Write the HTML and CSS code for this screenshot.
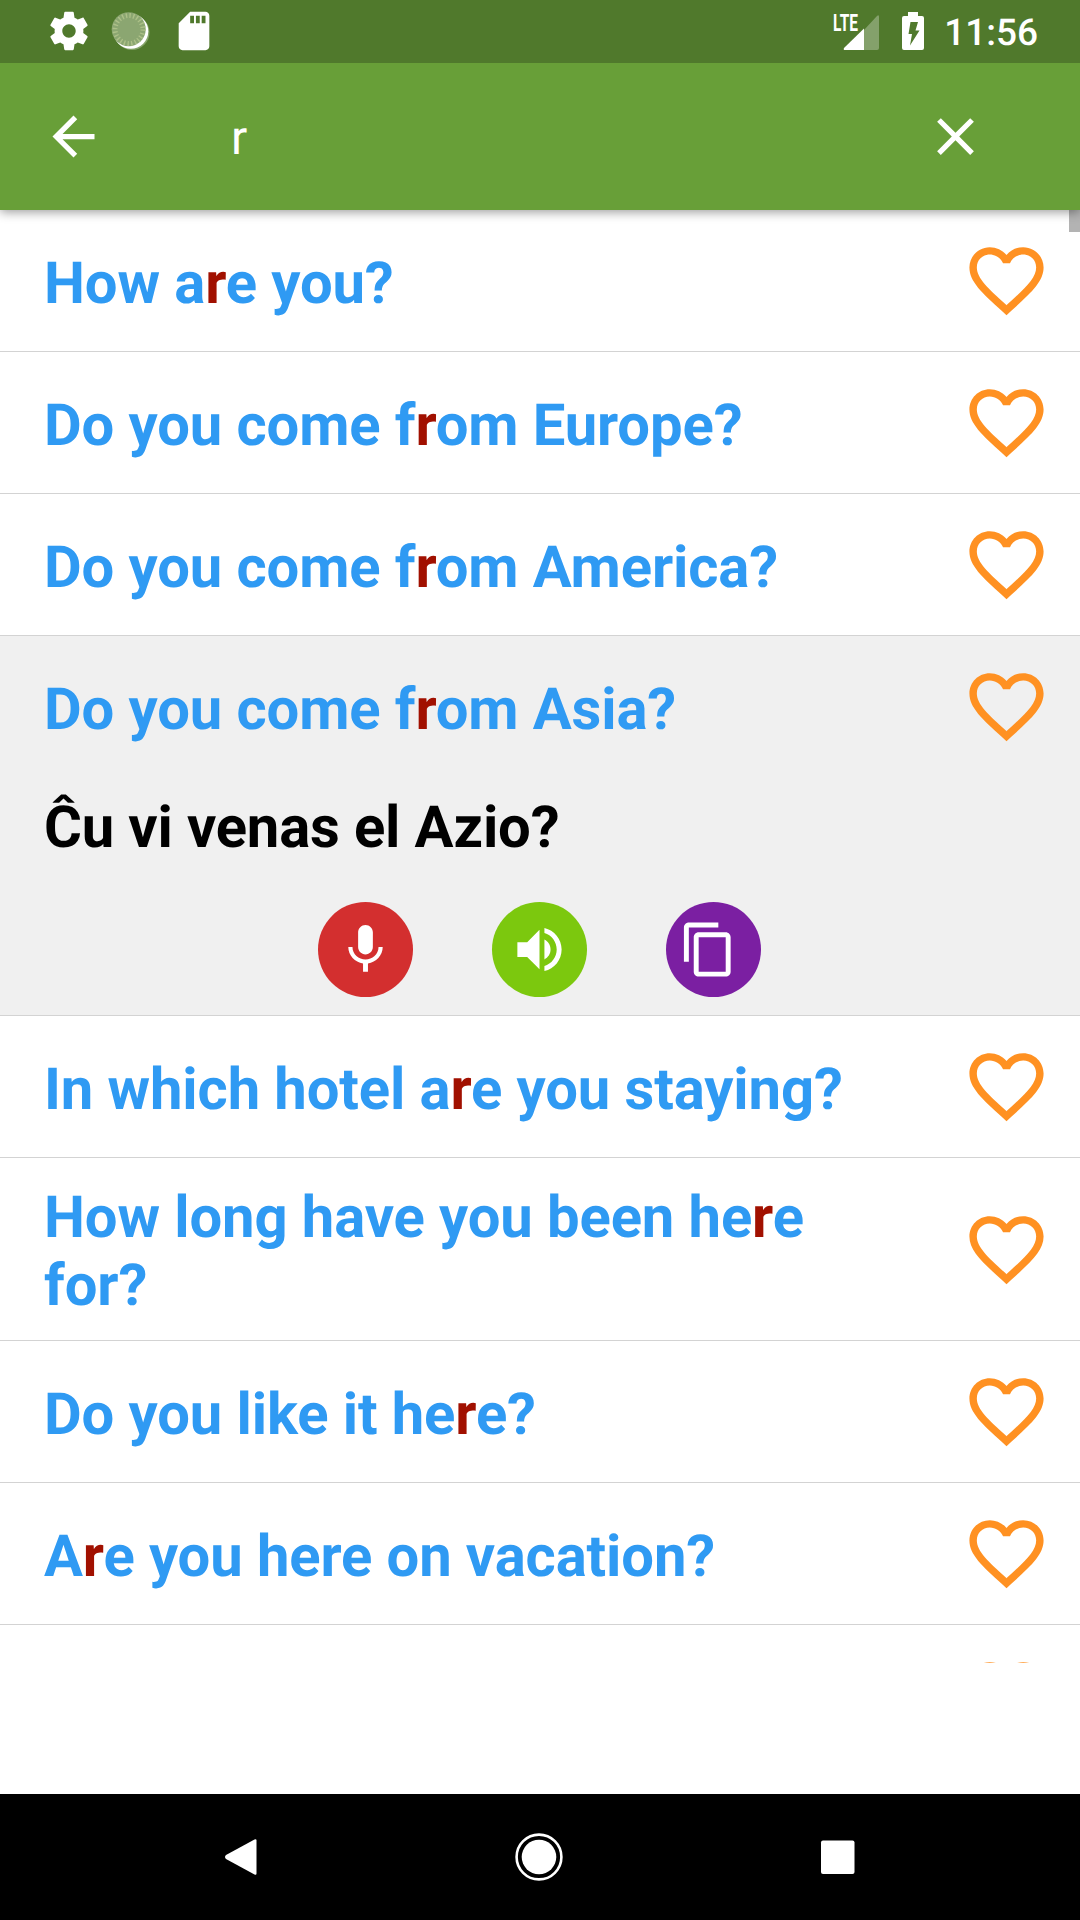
FILE: index.html
```html
<!DOCTYPE html>
<html lang="en">
<head>
    <meta charset="UTF-8">
    <title>Phrasebook</title>
    <link rel="stylesheet" href="styles.css">
</head>
<body>
    <svg class="defs">
        <symbol id="heart" viewBox="0 0 24 24">
            <path d="M16.5 3c-1.74 0-3.41.81-4.5 2.09C10.91 3.81 9.24 3 7.5 3 4.42 3 2 5.42 2 8.5c0 3.78 3.4 6.86 8.55 11.54L12 21.35l1.45-1.32C18.6 15.36 22 12.28 22 8.5 22 5.42 19.58 3 16.5 3zm-4.4 15.55l-.1.1-.1-.1C7.14 14.24 4 11.39 4 8.5 4 6.5 5.5 5 7.5 5c1.54 0 3.04.99 3.57 2.36h1.87C13.46 5.99 14.96 5 16.5 5c2 0 3.5 1.5 3.5 3.5 0 2.89-3.14 5.74-7.9 10.05z"/>
        </symbol>
    </svg>

    <div class="status-bar">
        <div class="status-left">
            <svg class="status-icon" viewBox="0 0 24 24"><path d="M19.43 12.98c.04-.32.07-.64.07-.98s-.03-.66-.07-.98l2.11-1.65c.19-.15.24-.42.12-.64l-2-3.46c-.12-.22-.39-.3-.61-.22l-2.49 1c-.52-.4-1.08-.73-1.69-.98l-.38-2.65C14.46 2.18 14.25 2 14 2h-4c-.25 0-.46.18-.49.42l-.38 2.65c-.61.25-1.17.59-1.69.98l-2.49-1c-.23-.09-.49 0-.61.22l-2 3.46c-.13.22-.07.49.12.64l2.11 1.65c-.04.32-.07.65-.07.98s.03.66.07.98l-2.11 1.65c-.19.15-.24.42-.12.64l2 3.46c.12.22.39.3.61.22l2.49-1c.52.4 1.08.73 1.69.98l.38 2.65c.03.24.24.42.49.42h4c.25 0 .46-.18.49-.42l.38-2.65c.61-.25 1.17-.59 1.69-.98l2.49 1c.23.09.49 0 .61-.22l2-3.46c.12-.22.07-.49-.12-.64l-2.11-1.65zM12 15.5c-1.93 0-3.5-1.57-3.5-3.5s1.57-3.5 3.5-3.5 3.5 1.57 3.5 3.5-1.57 3.5-3.5 3.5z"/></svg>
            <svg class="status-icon" viewBox="0 0 46 46">
                <circle cx="24" cy="24.500" r="17.500" fill="#84a368"/>
                <circle cx="22.800" cy="23.300" r="17.500"/>
                <circle cx="20.700" cy="21.200" r="17" fill="#8ba671"/>
                <circle cx="21" cy="21.500" r="14" fill="none" stroke="#adc088" stroke-width="5" stroke-dasharray="1.400 2.265"/>
            </svg>
            <svg class="status-icon" viewBox="0 0 24 24"><path d="M18 2h-8L4.02 8 4 20c0 1.1.9 2 2 2h12c1.1 0 2-.9 2-2V4c0-1.1-.9-2-2-2zm-6 6h-2V4h2v4zm3 0h-2V4h2v4zm3 0h-2V4h2v4z"/></svg>
        </div>
        <div class="status-right">
            <svg class="signal" viewBox="0 0 48 40">
                <text class="lte" x="0" y="18.500" textLength="25" lengthAdjust="spacingAndGlyphs">LTE</text>
                <path d="M31 18L44 4q2-2 2 1V36q0 2-2 2H31z" opacity=".3"/>
                <path d="M31 16.500V38H12q-2 0-1-2z"/>
            </svg>
            <svg class="battery" viewBox="0 0 22 38"><path fill-rule="evenodd" d="M6 0h10v4h4q2 0 2 2v30q0 2-2 2H2q-2 0-2-2V6q0-2 2-2h4zM8.500 10L6.500 22h3.500L8 33.500 17.500 18.500H13.500L16 10z"/></svg>
            <span class="clock">11:56</span>
        </div>
    </div>

    <div class="toolbar">
        <svg class="tool-icon" viewBox="0 0 24 24"><path d="M20 11H7.830l5.590-5.590L12 4l-8 8 8 8 1.410-1.410L7.830 13H20v-2z"/></svg>
        <span class="query">r</span>
        <svg class="tool-icon" viewBox="0 0 24 24"><path d="M19 6.410L17.590 5 12 10.590 6.410 5 5 6.410 10.590 12 5 17.590 6.410 19 12 13.410 17.590 19 19 17.590 13.410 12z"/></svg>
    </div>

    <div class="list">
        <div class="item">
            <div class="phrase">
                <span class="text">How a<em>r</em>e you?</span>
                <svg class="heart"><use href="#heart"/></svg>
            </div>
        </div>
        <div class="item">
            <div class="phrase">
                <span class="text">Do you come f<em>r</em>om Europe?</span>
                <svg class="heart"><use href="#heart"/></svg>
            </div>
        </div>
        <div class="item">
            <div class="phrase">
                <span class="text">Do you come f<em>r</em>om America?</span>
                <svg class="heart"><use href="#heart"/></svg>
            </div>
        </div>
        <div class="item open">
            <div class="phrase">
                <span class="text">Do you come f<em>r</em>om Asia?</span>
                <svg class="heart"><use href="#heart"/></svg>
            </div>
            <div class="translation">Ĉu vi venas el Azio?</div>
            <div class="actions">
                <div class="action mic">
                    <svg viewBox="0 0 24 24"><path d="M12 14c1.660 0 2.990-1.340 2.990-3L15 5c0-1.660-1.340-3-3-3S9 3.340 9 5v6c0 1.660 1.340 3 3 3zm5.300-3c0 3-2.540 5.100-5.300 5.100S6.700 14 6.700 11H5c0 3.410 2.720 6.230 6 6.720V21h2v-3.280c3.280-.48 6-3.300 6-6.720h-1.700z"/></svg>
                </div>
                <div class="action speak">
                    <svg viewBox="0 0 24 24"><path d="M3 9v6h4l5 5V4L7 9H3zm13.500 3c0-1.770-1.020-3.290-2.500-4.030v8.050c1.480-.73 2.500-2.250 2.500-4.020zM14 3.230v2.060c2.890.86 5 3.540 5 6.710s-2.110 5.850-5 6.710v2.060c4.010-.91 7-4.490 7-8.770s-2.990-7.860-7-8.770z"/></svg>
                </div>
                <div class="action copy">
                    <svg viewBox="0 0 24 24"><path d="M16 1H4c-1.100 0-2 .9-2 2v14h2V3h12V1zm3 4H8c-1.100 0-2 .9-2 2v14c0 1.100.9 2 2 2h11c1.100 0 2-.9 2-2V7c0-1.100-.9-2-2-2zm0 16H8V7h11v14z"/></svg>
                </div>
            </div>
        </div>
        <div class="item">
            <div class="phrase">
                <span class="text">In which hotel a<em>r</em>e you staying?</span>
                <svg class="heart"><use href="#heart"/></svg>
            </div>
        </div>
        <div class="item">
            <div class="phrase">
                <span class="text">How long have you been he<em>r</em>e for?</span>
                <svg class="heart"><use href="#heart"/></svg>
            </div>
        </div>
        <div class="item">
            <div class="phrase">
                <span class="text">Do you like it he<em>r</em>e?</span>
                <svg class="heart"><use href="#heart"/></svg>
            </div>
        </div>
        <div class="item">
            <div class="phrase">
                <span class="text">A<em>r</em>e you here on vacation?</span>
                <svg class="heart"><use href="#heart"/></svg>
            </div>
        </div>
        <div class="item">
            <div class="phrase">
                <span class="text"></span>
                <svg class="heart"><use href="#heart"/></svg>
            </div>
        </div>
        <div class="scrollbar"></div>
    </div>

    <div class="nav-bar">
        <svg viewBox="0 0 48 48"><path d="M37.500 6.500q2-1 2 1v33q0 2-2 1L9 26q-2-2 0-4z"/></svg>
        <svg viewBox="0 0 48 48"><circle cx="24" cy="24" r="22.400" fill="none" stroke="#fff" stroke-width="2.600"/><circle cx="24" cy="24" r="17.300"/></svg>
        <svg viewBox="0 0 48 48"><rect x="7" y="7.500" width="33.500" height="33.500" rx="2"/></svg>
    </div>
</body>
</html>
```
FILE: styles.css
```css
* {
    box-sizing: border-box;
}

body {
    margin: 0;
    width: 1080px;
    height: 1920px;
    display: flex;
    flex-direction: column;
    overflow: hidden;
    background: #fff;
    font-family: Roboto, sans-serif;
    text-rendering: geometricPrecision;
}

svg {
    display: block;
    flex: none;
    fill: #fff;
}

.defs {
    display: none;
}

.status-bar {
    height: 63px;
    flex: none;
    display: flex;
    justify-content: space-between;
    background: #50792c;
    color: #fff;
    z-index: 2;
}

.status-left {
    display: flex;
    gap: 16.5px;
    padding: 8px 0 0 45.5px;
}

.status-icon {
    width: 46px;
    height: 46px;
}

.status-right {
    display: flex;
    padding: 12px 42px 0 0;
}

.signal {
    width: 48px;
    height: 40px;
    overflow: visible;
}

.lte {
    font-size: 24px;
    font-weight: 700;
}

.battery {
    width: 22px;
    height: 38px;
    margin-left: 21px;
}

.clock {
    margin-left: 20px;
    font-size: 37px;
    line-height: 44px;
    font-weight: 500;
}

.toolbar {
    height: 147px;
    flex: none;
    display: flex;
    align-items: center;
    padding: 0 93px 0 42px;
    background: #689f38;
    box-shadow: 0 2px 10px rgba(0, 0, 0, 0.4);
    z-index: 1;
}

.tool-icon {
    width: 63px;
    height: 63px;
}

.query {
    flex: 1;
    padding: 2px 0 0 126px;
    font-size: 48px;
    color: #fff;
}

.list {
    position: relative;
    height: 1453px;
    flex: none;
    overflow: hidden;
}

.item {
    border-bottom: 1px solid #d3d3d3;
}

.phrase {
    min-height: 141px;
    display: flex;
    align-items: center;
    justify-content: space-between;
    padding: 23px 29px 23px 44px;
}

.text,
.translation {
    font-size: 58px;
    line-height: 68px;
    font-weight: 700;
    letter-spacing: -0.12px;
}

.text {
    width: 820px;
    padding-top: 3px;
    margin-bottom: -3px;
    color: #2f9af3;
}

.text em {
    font-style: normal;
    color: #a11000;
}

.heart {
    width: 89px;
    height: 89px;
    fill: #ff9122;
}

.open {
    background: #f0f0f0;
}

.translation {
    padding: 17px 44px 0;
    color: #000;
    letter-spacing: -0.18px;
}

.actions {
    display: flex;
    justify-content: center;
    gap: 79px;
    padding: 40px 1px 18px 0;
}

.action {
    width: 95px;
    height: 95px;
    display: flex;
    align-items: center;
    justify-content: center;
    border-radius: 50%;
}

.action svg {
    width: 59px;
    height: 59px;
}

.mic {
    background: #d32f2f;
}

.speak {
    background: #7cc80e;
}

.copy {
    padding-right: 11px;
    background: #7b1fa2;
}

.scrollbar {
    position: absolute;
    top: 0;
    right: 0;
    width: 11px;
    height: 22px;
    background: #b3b3b3;
}

.nav-bar {
    height: 126px;
    margin-top: auto;
    display: flex;
    align-items: center;
    justify-content: center;
    gap: 250.5px;
    padding-right: 2px;
    background: #000;
}

.nav-bar svg {
    width: 48px;
    height: 48px;
}
```
